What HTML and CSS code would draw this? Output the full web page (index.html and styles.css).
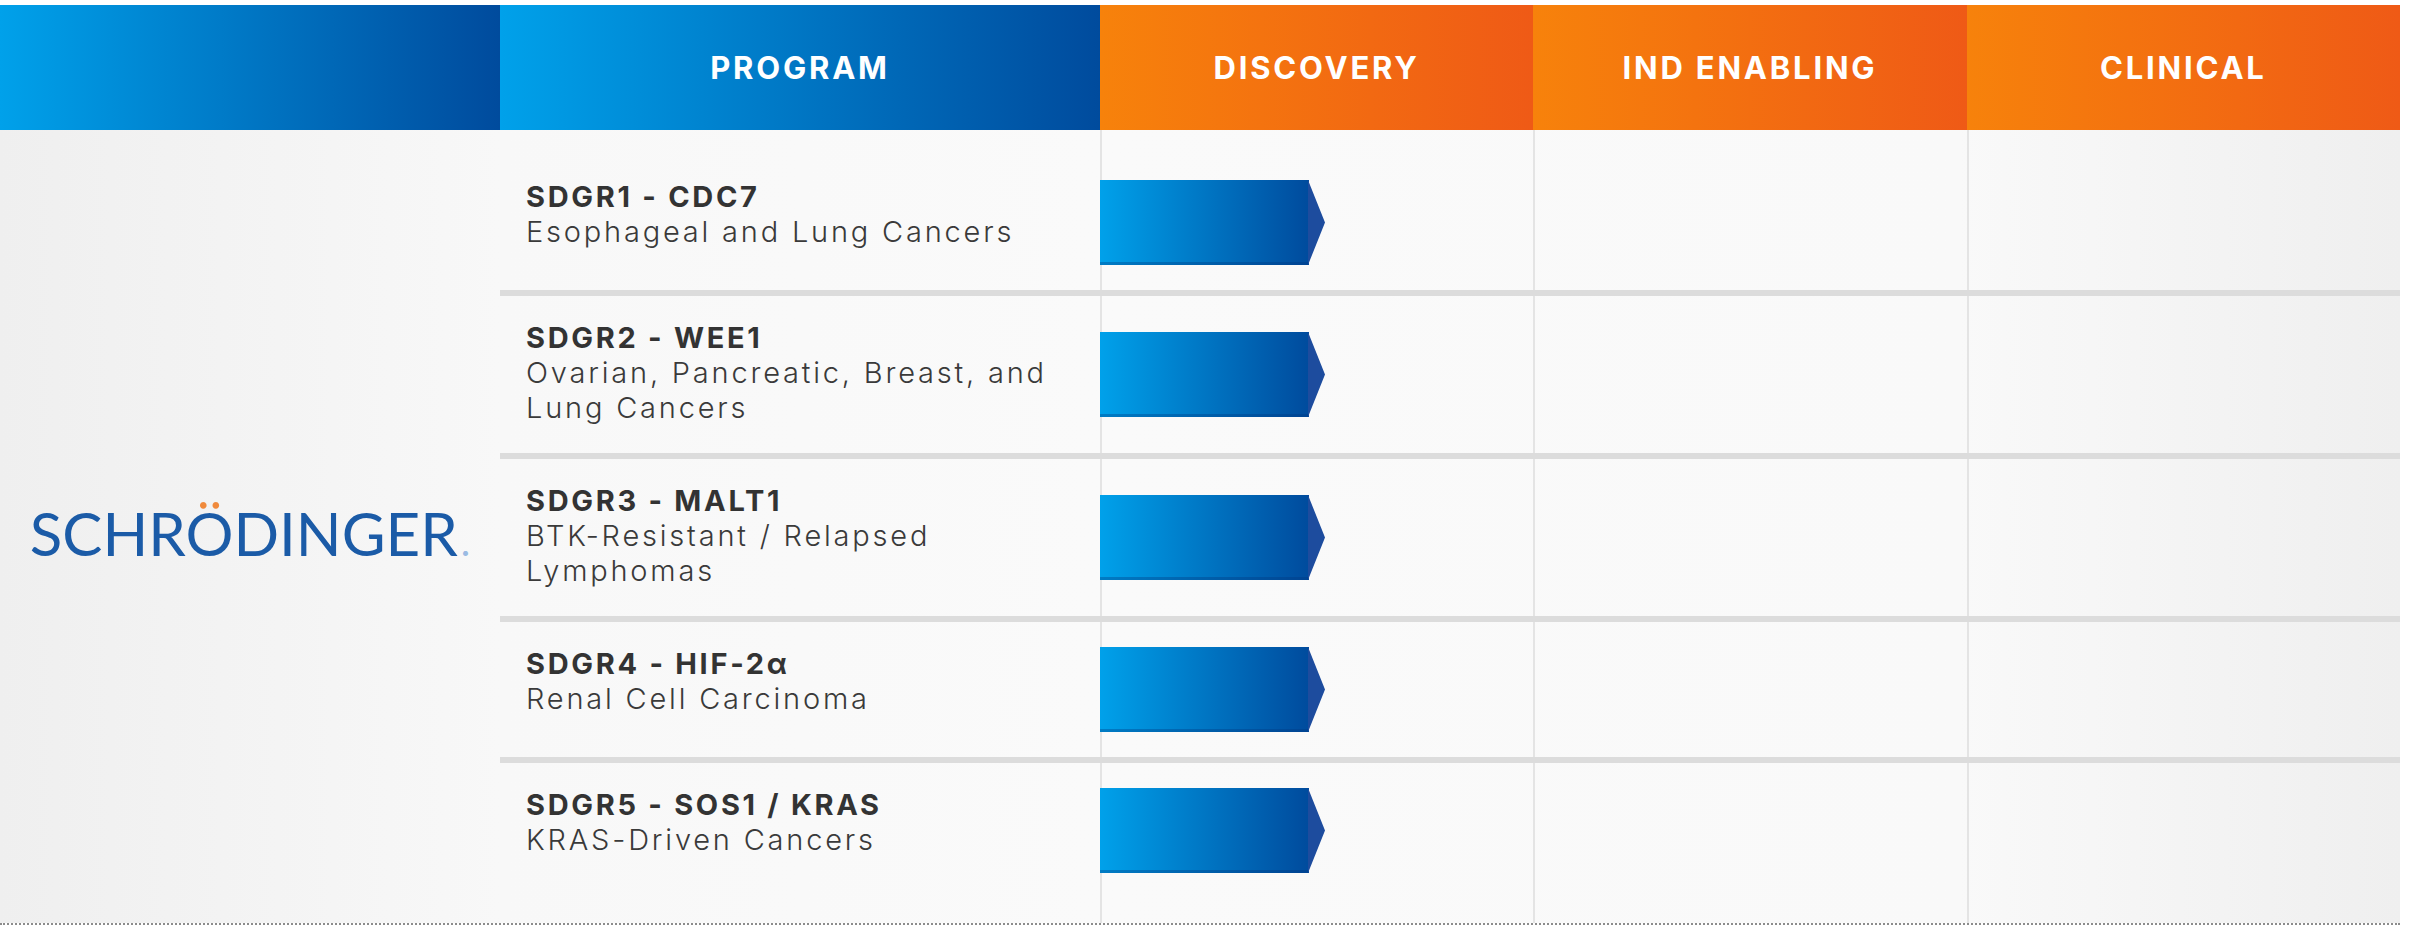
FILE: index.html
```html
<!DOCTYPE html>
<html lang="en">
<head>
<meta charset="utf-8">
<title>Schrödinger Pipeline</title>
<link rel="stylesheet" href="styles.css">
</head>
<body>
<svg class="defs" width="0" height="0" aria-hidden="true">
  <defs>
    <linearGradient id="arrowGrad" x1="0" y1="0" x2="1" y2="0">
      <stop offset="0" stop-color="#00a1ea"/>
      <stop offset="1" stop-color="#004b9d"/>
    </linearGradient>
  </defs>
</svg>
<div class="pipeline">
  <div class="head">
    <div class="h-cell h-blue"></div>
    <div class="h-cell h-blue">PROGRAM</div>
    <div class="h-cell h-orange">DISCOVERY</div>
    <div class="h-cell h-orange">IND ENABLING</div>
    <div class="h-cell h-orange">CLINICAL</div>
  </div>
  <div class="body">
    <div class="logo-col">
      <div class="logo">SCHR<span class="umlaut">Ö</span>DINGER<span class="reg">.</span></div>
    </div>
    <div class="rows">
      <div class="row">
        <div class="prog"><div class="title">SDGR1 - CDC7</div><div class="sub">Esophageal and Lung Cancers</div></div>
        <div class="stage"><svg class="arrow" width="225" height="85" viewBox="0 0 225 85"><rect x="0" y="0" width="209" height="85" fill="url(#arrowGrad)"/><polygon points="208,0 225,42.5 208,85" fill="#1d4c9e"/><rect x="0" y="82" width="208" height="3" fill="#00367f" opacity="0.35"/></svg></div>
        <div class="stage"></div>
        <div class="stage"></div>
      </div>
      <div class="row">
        <div class="prog"><div class="title">SDGR2 - WEE1</div><div class="sub">Ovarian, Pancreatic, Breast, and Lung Cancers</div></div>
        <div class="stage"><svg class="arrow" width="225" height="85" viewBox="0 0 225 85"><rect x="0" y="0" width="209" height="85" fill="url(#arrowGrad)"/><polygon points="208,0 225,42.5 208,85" fill="#1d4c9e"/><rect x="0" y="82" width="208" height="3" fill="#00367f" opacity="0.35"/></svg></div>
        <div class="stage"></div>
        <div class="stage"></div>
      </div>
      <div class="row">
        <div class="prog"><div class="title">SDGR3 - MALT1</div><div class="sub">BTK-Resistant / Relapsed Lymphomas</div></div>
        <div class="stage"><svg class="arrow" width="225" height="85" viewBox="0 0 225 85"><rect x="0" y="0" width="209" height="85" fill="url(#arrowGrad)"/><polygon points="208,0 225,42.5 208,85" fill="#1d4c9e"/><rect x="0" y="82" width="208" height="3" fill="#00367f" opacity="0.35"/></svg></div>
        <div class="stage"></div>
        <div class="stage"></div>
      </div>
      <div class="row">
        <div class="prog"><div class="title">SDGR4 - HIF-2α</div><div class="sub">Renal Cell Carcinoma</div></div>
        <div class="stage"><svg class="arrow" width="225" height="85" viewBox="0 0 225 85"><rect x="0" y="0" width="209" height="85" fill="url(#arrowGrad)"/><polygon points="208,0 225,42.5 208,85" fill="#1d4c9e"/><rect x="0" y="82" width="208" height="3" fill="#00367f" opacity="0.35"/></svg></div>
        <div class="stage"></div>
        <div class="stage"></div>
      </div>
      <div class="row">
        <div class="prog"><div class="title">SDGR5 - SOS1 / KRAS</div><div class="sub">KRAS-Driven Cancers</div></div>
        <div class="stage"><svg class="arrow" width="225" height="85" viewBox="0 0 225 85"><rect x="0" y="0" width="209" height="85" fill="url(#arrowGrad)"/><polygon points="208,0 225,42.5 208,85" fill="#1d4c9e"/><rect x="0" y="82" width="208" height="3" fill="#00367f" opacity="0.35"/></svg></div>
        <div class="stage"></div>
        <div class="stage"></div>
      </div>
    </div>
  </div>
</div>
</body>
</html>
```
FILE: styles.css
```css
html, body {
  margin: 0;
  padding: 0;
  background: #ffffff;
}
body {
  padding-top: 5px;
  font-family: Inter, "Liberation Sans", sans-serif;
}
.defs {
  position: absolute;
  width: 0;
  height: 0;
}
.pipeline {
  width: 2400px;
  border-bottom: 2px dotted #8c8c8c;
}
.head {
  display: grid;
  grid-template-columns: 500px 600px repeat(3, 1fr);
  height: 125px;
}
.h-cell {
  display: flex;
  align-items: center;
  justify-content: center;
  color: #ffffff;
  font-weight: 700;
  font-size: 31px;
  letter-spacing: 2.8px;
}
.h-blue {
  background: linear-gradient(to right, #00a1ea, #004b9d);
}
.h-orange {
  background: linear-gradient(to right, #f7820b, #ef5a16);
}
.body {
  display: grid;
  grid-template-columns: 500px 1fr;
  background: linear-gradient(to right, #efefef 0px, #f8f8f8 500px, #fafafa 1100px, #f9f9f9 1960px, #efefef 2400px);
}
.logo-col {
  display: flex;
  align-items: center;
  justify-content: center;
  padding-top: 13px;
}
.logo {
  font-family: Lato, "Noto Sans", sans-serif;
  font-weight: 400;
  font-size: 60px;
  color: #1b5ba7;
  line-height: 1.2;
  white-space: nowrap;
}
.umlaut {
  background: linear-gradient(to bottom, #f08a3c 0px, #f08a3c 14px, #1b5ba7 14px);
  -webkit-background-clip: text;
  background-clip: text;
  color: transparent;
}
.reg {
  color: #9bbbe3;
  font-size: 40px;
  margin-left: 3px;
}
.rows {
  padding: 25px 0;
  background:
    linear-gradient(to right,
      transparent 600px, #e4e4e4 600px, #e4e4e4 602px, transparent 602px,
      transparent 1033px, #e4e4e4 1033px, #e4e4e4 1035px, transparent 1035px,
      transparent 1467px, #e4e4e4 1467px, #e4e4e4 1469px, transparent 1469px);
}
.row {
  display: grid;
  grid-template-columns: 600px repeat(3, 1fr);
}
.row + .row {
  border-top: 6px solid #dcdcdc;
}
.prog {
  display: flex;
  flex-direction: column;
  justify-content: flex-start;
  padding: 24px 49px 28px 26px;
  line-height: 35px;
}
.title {
  font-weight: 700;
  font-size: 29px;
  color: #333333;
  letter-spacing: 2.7px;
}
.sub {
  font-weight: 300;
  font-size: 29px;
  color: #3a3a3a;
  letter-spacing: 2.8px;
}
.stage {
  display: flex;
  align-items: center;
  padding: 25px 0;
}
.arrow {
  display: block;
}
```
